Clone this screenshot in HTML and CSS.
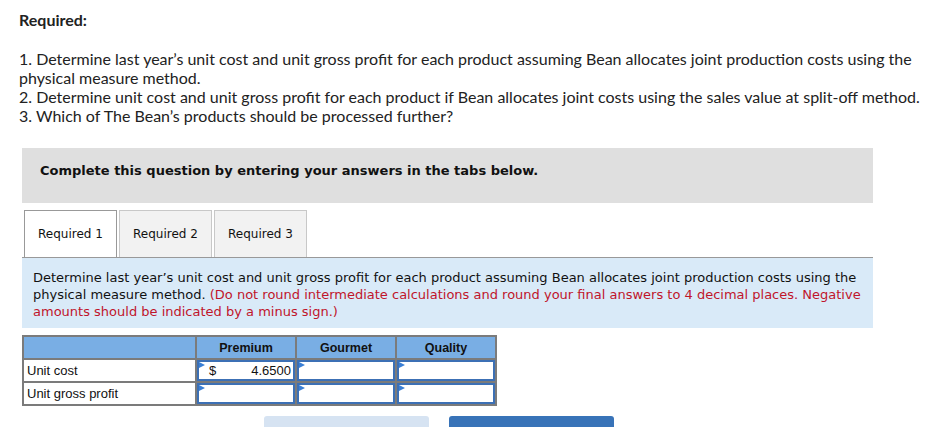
FILE: index.html
```html
<!DOCTYPE html>
<html>
<head>
<meta charset="utf-8">
<link rel="stylesheet" href="styles.css">
</head>
<body>
<div class="page">
  <div class="req-title">Required:</div>
  <div class="req-list">
    <p>1. Determine last year’s unit cost and unit gross profit for each product assuming Bean allocates joint production costs using the physical measure method.</p>
    <p>2. Determine unit cost and unit gross profit for each product if Bean allocates joint costs using the sales value at split-off method.</p>
    <p>3. Which of The Bean’s products should be processed further?</p>
  </div>

  <div class="complete-box">Complete this question by entering your answers in the tabs below.</div>

  <div class="tabs">
    <div class="tab active">Required 1</div>
    <div class="tab">Required 2</div>
    <div class="tab">Required 3</div>
  </div>

  <div class="instructions">Determine last year’s unit cost and unit gross profit for each product assuming Bean allocates joint production costs using the physical measure method. <span class="red">(Do not round intermediate calculations and round your final answers to 4 decimal places. Negative amounts should be indicated by a minus sign.)</span></div>

  <table class="grid">
    <tr class="head">
      <th class="label-col"></th>
      <th>Premium</th>
      <th>Gourmet</th>
      <th>Quality</th>
    </tr>
    <tr>
      <td class="label">Unit cost</td>
      <td class="cell"><div class="inp"><span class="cur">$</span><span class="val">4.6500</span></div></td>
      <td class="cell"><div class="inp"></div></td>
      <td class="cell"><div class="inp"></div></td>
    </tr>
    <tr>
      <td class="label">Unit gross profit</td>
      <td class="cell"><div class="inp"></div></td>
      <td class="cell"><div class="inp"></div></td>
      <td class="cell"><div class="inp"></div></td>
    </tr>
  </table>

  <div class="nav">
    <div class="btn prev"></div>
    <div class="btn next"></div>
  </div>
</div>
</body>
</html>
```

FILE: styles.css
```css
html, body {
  margin: 0;
  padding: 0;
  background: #fff;
  overflow: hidden;
}
.page {
  padding: 10px 0 0 19px;
  width: 910px;
}
.req-title {
  font-family: "Lato", "Open Sans", sans-serif;
  font-weight: 700;
  font-size: 16px;
  line-height: 19px;
  color: #222;
}
.req-list {
  margin-top: 20px;
  font-family: "Lato", "Open Sans", sans-serif;
  font-size: 16px;
  line-height: 19px;
  color: #222;
  width: 906px;
}
.req-list p {
  margin: 0;
}
.complete-box {
  margin: 23px 0 0 3px;
  width: 851px;
  height: 55px;
  box-sizing: border-box;
  background: #dfdfdf;
  padding: 15px 0 0 18px;
  font-family: "DejaVu Sans", Verdana, sans-serif;
  font-weight: 700;
  font-size: 13px;
  line-height: 16px;
  color: #111;
}
.tabs {
  display: flex;
  gap: 2px;
  margin: 7px 0 0 3px;
  width: 851px;
  height: 48px;
  box-sizing: border-box;
  border-bottom: 1px solid #999;
  padding-left: 2px;
}
.tab {
  width: 93px;
  height: 47px;
  box-sizing: border-box;
  border: 1px solid #c8c8c8;
  border-bottom: none;
  background: #f2f2f2;
  font-family: "DejaVu Sans", Verdana, sans-serif;
  font-size: 12px;
  color: #111;
  display: flex;
  align-items: center;
  justify-content: center;
}
.tab.active {
  background: #fff;
  border-color: #999;
}
.instructions {
  margin-left: 3px;
  width: 851px;
  box-sizing: border-box;
  background: #d9eaf8;
  padding: 11px 10px 8px 11px;
  font-family: "DejaVu Sans", Verdana, sans-serif;
  font-size: 13px;
  line-height: 17px;
  color: #111;
  height: 70px;
}
.red {
  color: #c0152b;
}
.grid {
  margin: 7px 0 0 3px;
  border-collapse: collapse;
  font-family: "Liberation Sans", Arial, sans-serif;
  font-size: 13px;
  color: #111;
}
.grid th, .grid td {
  border: 2px solid #7b7b7b;
  padding: 0;
}
.grid .head th {
  background: #79aee4;
  height: 21px;
  font-weight: 700;
  text-align: center;
  font-size: 12.5px;
}
.grid th.label-col {
  width: 171px;
}
.grid th {
  width: 98px;
}
.grid td.label {
  padding-left: 3px;
  height: 21px;
}
.grid td.cell {
  padding: 0;
  height: 21px;
}
.inp {
  position: relative;
  height: 21px;
  box-sizing: border-box;
  border: 2px solid #3c70b5;
  background: #fff;
  display: flex;
  justify-content: space-between;
  align-items: center;
  padding: 0 2px 0 10px;
  font-size: 13px;
}
.inp::before {
  content: "";
  position: absolute;
  left: 0;
  top: 0;
  border-left: 6px solid #3a7fd5;
  border-top: 3px solid transparent;
  border-bottom: 3px solid transparent;
}
.nav {
  display: flex;
  gap: 20px;
  margin: 10px 0 0 245px;
}
.btn {
  width: 165px;
  height: 20px;
  border-radius: 3px;
}
.btn.prev { background: #d6e3f2; }
.btn.next { background: #3873b8; }
```
